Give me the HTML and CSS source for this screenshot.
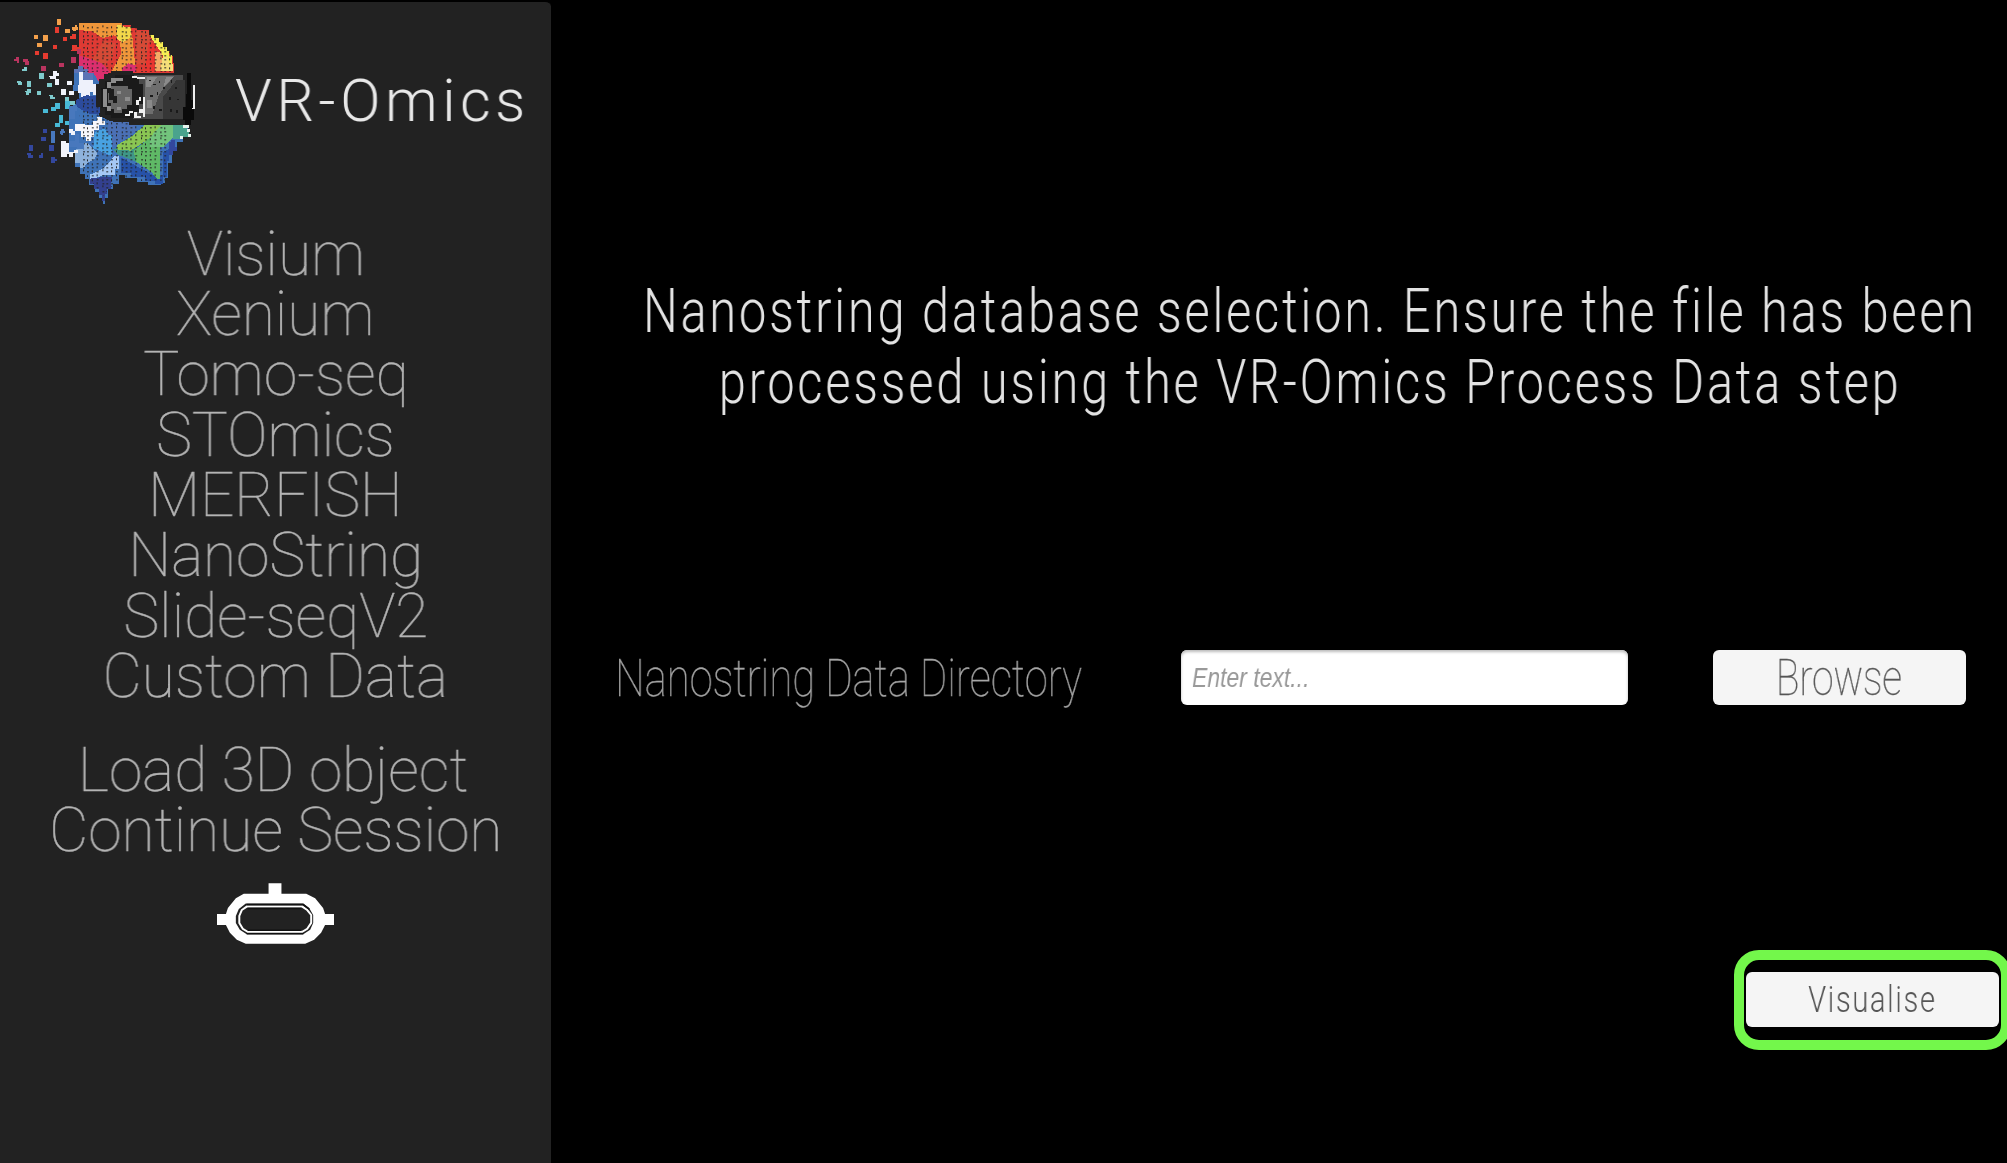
FILE: index.html
```html
<!DOCTYPE html>
<html lang="en">
<head>
<meta charset="utf-8">
<title>VR-Omics</title>
<link rel="stylesheet" href="styles.css">
</head>
<body>
<div class="app">
  <aside class="sidebar">
    <header class="brand">
      <svg class="logo" viewBox="0 0 630 630" width="210" height="210" shape-rendering="crispEdges" aria-hidden="true">
        <defs>
          <pattern id="holes" width="58" height="48" patternUnits="userSpaceOnUse" x="258" y="76">
            <path fill="#222" d="M3 6h6v3h-6zM18 3h3v6h-3zM33 6h6v3h-6zM48 0h3v6h-3zM3 18h3v6h-3zM18 18h6v3h-6zM33 15h3v6h-3zM48 18h6v3h-6zM3 30h6v3h-6zM18 30h3v6h-3zM33 30h6v3h-6zM48 30h3v6h-3zM3 42h6v3h-6zM18 42h6v3h-6zM33 39h3v6h-3zM48 42h6v3h-6z"/>
          </pattern>
        </defs>
        <!-- upper half of the head -->
        <path fill="#df3a34" d="M238 70h128v6h26v8h20v6h34v14h16v10h14v12h12v14h12v14h10v14h8v22h4v30h-208l-14 30h-10v-14l-20-12v-10l-20-14v-20h-12z"/>
        <path fill="#f0973a" d="M238 70h128v48l-26-12-32 8-30-20-40-4zM360 128l36-28 10 100-16 6-10 12h-48l20-34 12-24z"/>
        <path fill="#d64a36" d="M310 122l36 8-8 40-28 28-36-12zM408 94h38v14l20 20-18 64h-40z"/>
        <path fill="#e93530" d="M446 126l20 6v84h-32z"/>
        <path fill="#dc2f6e" d="M238 166l26 8 38 14 28 26-18 18v16h-22l-20-28-32-14zM366 204l20-14 22 6v20h-42z"/>
        <path fill="#f2d84a" d="M352 76h14l12 6 16 0v28l-18 12-10 6-14-12z"/>
        <path fill="#f5ab66" d="M466 154l22 6-4 54h-18z"/>
        <path fill="#f7ee52" d="M448 104h14v10h14v12h12v14h12v14h6v12h10v28h-20l-10-34-22-30z"/>
        <path fill="#f5df79" d="M486 176l16-8 6 24h10v22h-36z"/>
        <!-- lower half of the head -->
        <path fill="#3f73b8" d="M222 208h12v-10h14v10h16v10h16l18 30v100l40 18h206v12h20v34h-14v14h-20v26h-14v36h-12v46h-10v14h-10v8h-40v-10h-34v-12h-34v-10h-18v28h-20v16h-14v26h-8v18h-8v-18h-10v-18h-14v-20h-16v-20h-12v-14h-16v-20h-16v-46h-16v-130h10v-14h18v-40h-16z"/>
        <path fill="#5b73b5" d="M222 208h12v-10h14v10h16v10h16v32l-34-14v-18h-24z"/>
        <path fill="#eef1fb" d="M238 216h12v24h28v12h16v34h-14v-10h-10v16h-26v-12h-10z"/>
        <path fill="#2c4b9c" d="M228 300l30-14 30 2 20 40-14 16-30-4-34-20z"/>
        <path fill="#4b70b5" d="M324 364h84v30l-44 30-26 18-16-30z"/>
        <path fill="#f7f7fb" d="M226 372h28v4h24v-14h14v-10h14v10h8v14h-18v14h-14v20h-8v14h-16v-12h-16v-20h-16z"/>
        <path fill="#48a2e2" d="M284 396l30-10 12 20h10v62l-20-8-36-16z"/>
        <path fill="#8eb2dc" d="M238 430h24l30 28-8 20-24 12-8 14h-12v-16h-14v-34z"/>
        <path fill="#a5c8f5" d="M344 468h12v40h-12v16h-30l-44 16v-16l40-18z"/>
        <path fill="#33408f" d="M270 536l30-4 36 0-4 36h-10v14h-8v20h-8v-18h-10v-18h-14v-14h-12z"/>
        <path fill="#2752a8" d="M362 472l106 58 20-4v-70l20-10v36h-8v50h-10v20h-24v-8h-32v-12h-40v-14h-32z"/>
        <path fill="#3f9787" d="M340 448l66-20 8 60-60-24z"/>
        <path fill="#8ac653" d="M436 372h52v14l-40 30-56 36-42-4v-12l50-30z"/>
        <path fill="#5fb966" d="M400 452l50-40 30-10v134h-10l-16-20-44-30z"/>
        <path fill="#72c47c" d="M484 374h38v36l-30 30h-42v-28z"/>
        <path fill="#4aa38d" d="M520 376h40v10h6v24h-22v6h-24z"/>
        <path fill="#e5f2ec" d="M550 376h18v8h-18zM562 388h8v8h-8zM564 402h10v8h-10zM540 408h10v8h-10z"/>
        <path fill="url(#holes)" d="M246 76h270v140H250zM238 296h68l60 66h140l-8 180H350l-40 46-70-84z"/>
        <!-- headset -->
        <path fill="#222" d="M288 252h8v-16h16v-14h22v-10h66v6h172v156h-184v-8h-50v-8h-22v-16h-16v-22h-12z"/>
        <path fill="#4a4a4a" d="M400 226h150v132h-150z"/>
        <path fill="#6e6e6e" d="M436 228h86l-44 54-20 60h-24z"/>
        <path fill="#8a8a8a" d="M440 232h30l-20 30h-12zM498 232h22l-30 30zM440 300h16v24h-16z"/>
        <path fill="#363636" d="M490 290l40-50h24v118h-64z"/>
        <path fill="#0a0a0a" d="M562 220h12v80h8v60h-10v14h-16v-14h-8v-38h10z"/>
        <path fill="#1a1a1a" d="M344 226h58v8h16v18h10v60h-10v24h-16v18h-70v-10h-18v-20h-12v-60h14v-20h28z"/>
        <path fill="#8d8d8d" d="M334 234h34v8h-20v8h-14v14h-12v54h10v16h-12v-14h-10v-54h10v-20h14z"/>
        <path fill="#666" d="M334 258h50v10h12v48h-14v12h-16v12h-24v-14h-8v-18h-10v-30h10z"/>
        <path fill="#1c1c1c" d="M326 268h16v20h8v20h-10v-8h-14z"/>
        <path fill="#8d8d8d" d="M352 272h10v10h-10zM376 290h14v14h-14zM350 320h12v10h-12z"/>
        <path fill="#f0f0f0" d="M408 300h10v-8h6v10h-6v14h-10zM430 290h6v62h-8v-12h-10v-12h12zM376 342h12v-8h12v6h-10v8h-14zM402 336h8v12h14v6h-22zM396 228h14v4h24v6h-24v-4h-14zM580 256h6v72h-10v-4h4z"/>
        <path fill="#1a1a1a" d="M446 240h6v4h-6zM460 252h8v4h-8zM476 242h5v7h-5zM512 240h5v8h-5zM488 262h7v4h-7zM524 262h6v4h-6zM450 286h8v5h-8zM470 276h5v8h-5zM508 292h5v8h-5zM530 296h6v5h-6zM460 318h5v8h-5zM478 328h8v4h-8zM510 328h5v7h-5zM528 330h5v8h-5z"/>
        <!-- scattered pixels -->
        <path fill="#f3a04b" d="M172 58h12v18h-14v-12h2zM102 106h12v12h-12zM130 106h13v18h-13zM112 130h13v12h-13zM196 88h13v12h-13zM216 80h8v-4h6v6h4v8h-6v4h-8v-4h-4z"/>
        <path fill="#e53b30" d="M166 82h12v18h-12zM190 112h12v12h-12zM210 108h6v-6h12v16h-18zM106 154h12v12h-12zM130 160h13v18h-13zM160 136h12v12h-12zM216 136h14v4h6v-8h8v14h-10v8h-20z"/>
        <path fill="#b9345f" d="M42 176h6v-4h10v16h-8v-6h-8zM70 178h14v4h4v12h-12v-8h-6zM124 198h13v16h-13zM178 190h13v12h-13zM214 172h13v18h-13zM232 148h12v14h-12z"/>
        <path fill="#7fcacc" d="M66 208h6v-6h10v12h-16zM52 242h10v4h4v10h-12v-8h-2zM82 244h12v18h-12zM118 220h13v16h-13zM142 250h13v12h-13zM112 274h12v12h-12zM76 272h6v-6h10v14h-6v6h-8zM148 286h12v4h4v8h-14zM196 292h12v10h16v12h-14v14h-14z"/>
        <path fill="#48b9d6" d="M166 310h13v18h-12v4h-14v-10h12zM130 328h13v12h-13zM178 346h12v24h-10v12h-14v-12h12zM196 304h13v22h-13zM196 362h12v12h-12z"/>
        <path fill="#f2f4fb" d="M148 228h12v-14h12v6h4v8h-8v8h-18zM164 238h14v16h-14zM202 244h13v12h-13zM184 268h13v18h-13zM208 274h13v12h-13zM184 424h14v6h10v26h14v-6h12v10h-14v10h-12v-8h-8v10h-16zM208 386h10v6h8v12h-14v-6h-4z"/>
        <path fill="#4878bd" d="M154 394h12v36h-12zM180 394h4v-6h8v4h4v8h-8v4h-6zM208 318h22v16h-4v22h-18zM226 402h12v26h14v20h-22v-8h-22v-18h16z"/>
        <path fill="#33479d" d="M130 388h12v10h-12zM124 412h13v12h-13zM88 436h12v18h-12zM148 436h13v18h-13zM82 460h12v4h6v10h-16zM116 464h6v-6h8v16h-14zM154 472h12v4h6v8h-6v4h-12zM508 426h6v-6h10v20h8v14h-12v12h-12z"/>
      </svg>
      <h1 class="title"><span>VR-Omics</span></h1>
    </header>
    <nav class="menu">
      <a><span>Visium</span></a>
      <a><span>Xenium</span></a>
      <a><span>Tomo-seq</span></a>
      <a><span>STOmics</span></a>
      <a><span>MERFISH</span></a>
      <a><span>NanoString</span></a>
      <a><span>Slide-seqV2</span></a>
      <a><span>Custom Data</span></a>
    </nav>
    <nav class="menu session">
      <a class="load"><span>Load 3D object</span></a>
      <a><span>Continue Session</span></a>
    </nav>
    <svg class="vr-icon" viewBox="0 0 118 62" width="117" height="62" aria-label="VR mode">
      <path fill="#fff" d="M52 0h13v11H52zM0 31h10v11H0zM108 31h10v11h-10z"/>
      <path fill="#fff" fill-rule="evenodd" d="M27 10.500H90L99 15L107 25L109 31V42L105 50L98 57L89 61H29L20 57L13 50L9 42V31L11 25L19 15ZM29 20.500L22 26L19 33V40L23 47L30 51.500H87L94 47L97 40V32L93 25L87 20.500Z"/>
      <path fill="none" stroke="#fff" stroke-width="2" d="M30 23.500H86L91 27L95 32V40L91 46L86 49H31L26 46L22.500 40V33L25 27Z"/>
      <path fill="none" stroke="#111" stroke-width="1.500" d="M30 21.500H87L93 26M31 25.500H85M31 47.300H85M30 50.800H87"/>
    </svg>
  </aside>
  <main class="panel">
    <p class="intro">
      <span>Nanostring database selection. Ensure the file has been</span>
      <span>processed using the VR-Omics Process Data step</span>
    </p>
    <div class="field">
      <label class="field-label"><span>Nanostring Data Directory</span></label>
      <div class="input"><span>Enter text...</span></div>
      <button class="btn browse"><span>Browse</span></button>
    </div>
    <div class="highlight">
      <button class="btn visualise"><span>Visualise</span></button>
    </div>
  </main>
</div>
</body>
</html>
```
FILE: styles.css
```css
* { box-sizing: border-box; }

body {
  margin: 0;
  background: #000;
  font-family: Roboto, "Liberation Sans", sans-serif;
}

.app {
  display: flex;
  width: 2007px;
  height: 1163px;
  overflow: hidden;
}

.app span {
  display: inline-block;
  white-space: nowrap;
  will-change: transform;
}

/* sidebar */
.sidebar {
  display: flex;
  flex-direction: column;
  align-items: center;
  flex: none;
  width: 551px;
  background: #222;
  border-top: 2px solid #000;
  border-top-right-radius: 6px;
}

.brand {
  display: flex;
  align-self: stretch;
  height: 221.5px;
}

.logo {
  flex: none;
  margin-top: -2px;
}

.title {
  margin: 64px 0 0 25px;
  font-size: 60px;
  font-weight: 300;
  line-height: 70px;
  color: #e8e8e8;
}

.title span {
  letter-spacing: 4.6px;
  transform: scaleX(.99);
  transform-origin: left;
}

.menu {
  display: flex;
  flex-direction: column;
  align-items: center;
}

.menu a {
  height: 60.4px;
  font-size: 61px;
  font-weight: 100;
  line-height: 60.4px;
  color: #b4b4b4;
  -webkit-text-stroke: .4px #b4b4b4;
}

.menu span { transform: scaleX(.991); }

.session { margin-top: 33px; }

.load { margin-right: 5px; }

.vr-icon { margin-top: 23px; }

/* main panel */
.panel {
  display: flex;
  flex-direction: column;
  flex: 1;
  min-width: 0;
}

.intro {
  display: flex;
  flex-direction: column;
  align-items: center;
  margin: 276px 0 0 62px;
  font-size: 60.5px;
  font-weight: 300;
  line-height: 71px;
  color: #e2e2e2;
}

.intro span {
  letter-spacing: 3.45px;
  transform: scaleX(.8055);
}

.field {
  display: flex;
  height: 55px;
  margin: 232px 0 0 64px;
}

.field-label {
  width: 566px;
  font-size: 52.6px;
  font-weight: 100;
  line-height: 57px;
  color: #a6a6a6;
  -webkit-text-stroke: .3px #a6a6a6;
}

.field-label span {
  transform: scaleX(.7955);
  transform-origin: left;
}

.input {
  width: 446.5px;
  padding-left: 11px;
  border-radius: 6px;
  background: #fff;
  box-shadow: inset 0 2px 3px #bbb;
  font: italic 28px/55px "Liberation Sans", Arial, sans-serif;
  color: #999;
}

.input span {
  transform: scaleX(.82);
  transform-origin: left;
}

.btn {
  display: flex;
  align-items: center;
  justify-content: center;
  height: 55px;
  padding: 0;
  border: 0;
  border-radius: 6px;
  background: #f5f5f5;
  font-family: inherit;
  color: #555;
}

.browse {
  width: 253px;
  margin-left: 85px;
  font-size: 50px;
  font-weight: 100;
  -webkit-text-stroke: .3px #555;
}

.browse span { transform: scaleX(.78); }

.highlight {
  align-self: flex-end;
  width: 277px;
  height: 100px;
  margin: 245px -4px 0 0;
  padding: 12px 0 0 2px;
  border: 10px solid #73f74b;
  border-radius: 25px;
}

.visualise {
  width: 253px;
  font-size: 36.5px;
  font-weight: 300;
}

.visualise span {
  letter-spacing: 2px;
  transform: scaleX(.8);
}
```
